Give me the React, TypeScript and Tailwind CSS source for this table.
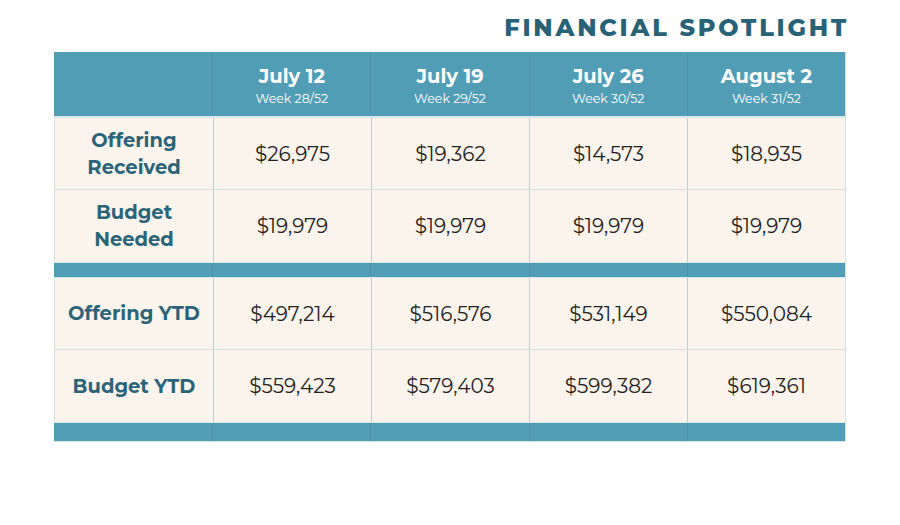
import React from 'react';

const weeks = [
  { date: 'July 12', week: 'Week 28/52' },
  { date: 'July 19', week: 'Week 29/52' },
  { date: 'July 26', week: 'Week 30/52' },
  { date: 'August 2', week: 'Week 31/52' },
];

const weekly = [
  { label: ['Offering', 'Received'], values: ['$26,975', '$19,362', '$14,573', '$18,935'] },
  { label: ['Budget', 'Needed'], values: ['$19,979', '$19,979', '$19,979', '$19,979'] },
];

const ytd = [
  { label: ['Offering YTD'], values: ['$497,214', '$516,576', '$531,149', '$550,084'] },
  { label: ['Budget YTD'], values: ['$559,423', '$579,403', '$599,382', '$619,361'] },
];

const font = { fontFamily: 'Montserrat, "DejaVu Sans", Inter, sans-serif' };

const Band: React.FC<{ h: string }> = ({ h }) => (
  <div className={`grid grid-cols-5 ${h} bg-[#529db6]`}>
    {[0, 1, 2, 3, 4].map(i => (
      <div key={i} className={i > 0 ? 'border-l border-[#4a91a9]' : ''} />
    ))}
  </div>
);

const Row: React.FC<{ label: string[]; values: string[] }> = ({ label, values }) => (
  <div className="grid grid-cols-5 h-[72px] bg-[#fbf4ec] border-b border-[#d3e1e2] last:border-b-0">
    <div className="flex flex-col items-center justify-center text-[19.5px] font-bold leading-[27px] text-[#2b6479]">
      {label.map(l => (
        <span key={l}>{l}</span>
      ))}
    </div>
    {values.map((v, i) => (
      <div key={i} className="flex items-center justify-center border-l border-[#bfcfd1] text-[20px] text-[#222222]">
        {v}
      </div>
    ))}
  </div>
);

const App: React.FC = () => {
  return (
    <div className="w-[900px] h-[525px] bg-white px-[54px] pt-[12px]" style={font}>
      <h1 className="text-right text-[24px] font-extrabold tracking-[2.8px] text-[#286276] leading-[32px] mr-[-3px]">
        FINANCIAL SPOTLIGHT
      </h1>
      <div className="mt-[8px] border-r border-[#d3e1e2]">
        {/* Header */}
        <div className="grid grid-cols-5 h-[66px] bg-[#529db6] border-b-2 border-[#d6e6ea]">
          <div />
          {weeks.map(w => (
            <div key={w.date} className="flex flex-col items-center justify-center pt-[4px] border-l border-[#4a91a9] text-white">
              <span className="text-[19.5px] font-bold leading-[24px]">{w.date}</span>
              <span className="text-[12.5px] font-normal leading-[21px]">{w.week}</span>
            </div>
          ))}
        </div>
        <div className="border-l border-[#d3e1e2]">
          {weekly.map(r => (
            <Row key={r.label.join()} label={r.label} values={r.values} />
          ))}
        </div>
        <div className="border-y border-[#d6e6ea]">
          <Band h="h-[14px]" />
        </div>
        <div className="border-l border-[#d3e1e2]">
          {ytd.map(r => (
            <Row key={r.label.join()} label={r.label} values={r.values} />
          ))}
        </div>
        <div className="border-y border-[#d6e6ea]">
          <Band h="h-[18px]" />
        </div>
      </div>
    </div>
  );
};

export default App;
